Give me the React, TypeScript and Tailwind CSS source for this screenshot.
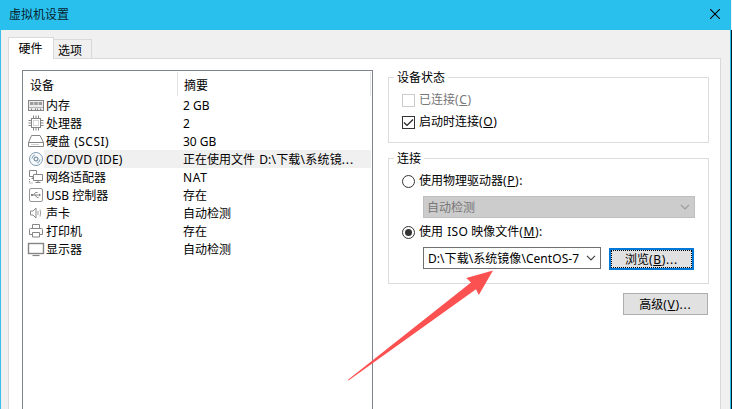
import React from "react";

type Device = { icon: React.ReactNode; name: React.ReactNode; summary: React.ReactNode; selected?: boolean };

const G = "#858585";

const Svg = ({ children }: { children: React.ReactNode }) => (
  <svg width="18" height="18" viewBox="0 0 18 18" fill="none" stroke={G} className="shrink-0">
    {children}
  </svg>
);

const MemoryIcon = () => (
  <Svg>
    <rect x="1.500" y="4.500" width="15" height="10" fill="#ececec" />
    <path d="M3 6h3.500v3H3zM7.300 6h3.500v3H7.300zM11.600 6H15v3h-3.400z" fill="#9c9c9c" stroke="none" />
    <path d="M2 11.500h14" stroke="#b4b4b4" />
    <path d="M4.500 12.500v2M8.500 12.500v2M10.500 12.500v2M13.500 12.500v2" />
  </Svg>
);
const CpuIcon = () => (
  <Svg>
    <rect x="4.500" y="4.500" width="9" height="9" />
    <rect x="6.500" y="6.500" width="5" height="5" stroke="#d5d5d5" />
    <path d="M6.500 1.500v3M9 1.500v3M11.500 1.500v3M6.500 13.500v3M9 13.500v3M11.500 13.500v3M1.500 6.500h3M1.500 9h3M1.500 11.500h3M13.500 6.500h3M13.500 9h3M13.500 11.500h3" />
  </Svg>
);
const DiskIcon = () => (
  <Svg>
    <path d="M4.500 3.500h8.500L16.500 10.500v4h-15v-4zM1.500 10.500h15" strokeLinejoin="round" />
    <path d="M4 12.500h8" stroke="#d0d0d0" />
  </Svg>
);
const DiscIcon = () => (
  <Svg>
    <circle cx="9" cy="9" r="6.500" stroke="#7f9cb3" fill="#f6fafc" />
    <circle cx="9" cy="9" r="2" stroke="#58778f" />
    <path d="M5 8.500A4 4 0 0 1 8 5M13 9.500A4 4 0 0 1 10 13" stroke="#7f9cb3" />
  </Svg>
);
const NetworkIcon = () => (
  <Svg>
    <path d="M2.500 2.500h7v6h-7zM4.500 10.500h3M6 8.500v2" />
    <path d="M6.500 6.500h9v6h-9z" fill="#fff" />
    <path d="M11 12.500v2M8.500 14.500h5" />
    <path d="M2.500 11v4h4" strokeDasharray="1 1" />
  </Svg>
);
const UsbIcon = () => (
  <Svg>
    <rect x="2.500" y="2.500" width="13" height="13" rx="1.500" stroke="#969696" />
    <path d="M5 9h8M6.500 9l2-2.500h2M8 9l2 2.500h1.500" />
    <path d="M12 7.500L14 9l-2 1.500zM4 8h2v2H4z" fill={G} stroke="none" />
  </Svg>
);
const SoundIcon = () => (
  <Svg>
    <path d="M3.500 7h2.500l3-3v10l-3-3H3.500z" stroke="#8a8a8a" />
    <path d="M11 7v4M13 5.500q1.200 3.500 0 7" stroke="#a2a2a2" />
  </Svg>
);
const PrinterIcon = () => (
  <Svg>
    <path d="M5.500 6.500v-4h7v4M5.500 12.500h-3v-5q0-1 1-1h11q1 0 1 1v5h-3" />
    <path d="M5.500 10.500h7v4.500h-7z" />
  </Svg>
);
const DisplayIcon = () => (
  <Svg>
    <rect x="1.500" y="3.500" width="15" height="10" strokeWidth="1.400" />
    <path d="M5.500 15.500h7" strokeWidth="1.200" />
  </Svg>
);

const Dots = () => <span className="tracking-[0.8px]">...</span>;

const devices: Device[] = [
  { icon: <MemoryIcon />, name: "内存", summary: "2 GB" },
  { icon: <CpuIcon />, name: "处理器", summary: "2" },
  { icon: <DiskIcon />, name: <>硬盘 <span className="ml-px tracking-[0.5px]">(SCSI)</span></>, summary: "30 GB" },
  {
    icon: <DiscIcon />,
    name: <span className="tracking-[0.1px]">CD/DVD (IDE)</span>,
    summary: <>正在使用文件 <span className="ml-px tracking-[0.2px]">D:\下载\系统镜</span><Dots /></>,
    selected: true,
  },
  { icon: <NetworkIcon />, name: "网络适配器", summary: <span className="tracking-[0.7px]">NAT</span> },
  { icon: <UsbIcon />, name: "USB 控制器", summary: "存在" },
  { icon: <SoundIcon />, name: "声卡", summary: "自动检测" },
  { icon: <PrinterIcon />, name: "打印机", summary: "存在" },
  { icon: <DisplayIcon />, name: "显示器", summary: "自动检测" },
];

const Key = ({ k }: { k: string }) => (
  <span className="tracking-[0.6px]">
    (<span className="underline decoration-1 underline-offset-[1px]">{k}</span>)
  </span>
);

const Radio = ({ checked }: { checked?: boolean }) => (
  <span className="flex size-[13px] shrink-0 items-center justify-center rounded-full border border-[#333] bg-white">
    {checked && <span className="size-[7px] rounded-full bg-[#333]" />}
  </span>
);

const Chevron = ({ color }: { color: string }) => (
  <svg width="10" height="6" viewBox="0 0 10 6" fill="none" stroke={color} strokeWidth="1.200" className="shrink-0">
    <path d="M1 .8L5 4.800 9 .8" />
  </svg>
);

export default function App() {
  return (
    <div className="relative flex h-[409px] w-[732px] flex-col overflow-hidden bg-[#f0f0f0] font-['Noto_Sans','Noto_Sans_CJK_SC',sans-serif] text-[12px] leading-[18px] whitespace-nowrap text-black">
      <header className="flex h-[30px] w-[731px] shrink-0 items-center justify-between bg-[#29c0ee] pr-[11px] pl-[9px]">
        <span className="text-[#06222c]">虚拟机设置</span>
        <svg width="10" height="10" viewBox="0 0 10 10" stroke="#000" strokeWidth="1.100" className="-translate-y-[1px]">
          <path d="M0 0L10 10M10 0L0 10" />
        </svg>
      </header>

      <div className="flex min-h-0 flex-1 flex-col border-r border-l border-r-[#101c22] border-l-[#35bfea]">
        <div className="flex min-h-0 flex-1 flex-col border-r border-[#29c0ee] pr-[9px] pl-[7px]">
          <nav className="z-10 -mb-px flex h-[29px] shrink-0 items-end">
            <div className="flex h-[22px] w-[46px] justify-center border border-b-0 border-[#d9d9d9] bg-white pt-[2px] pr-[7px] pl-[6px]">硬件</div>
            <div className="flex h-[20px] w-[38px] border border-l-0 border-[#d9d9d9] bg-[#f0f0f0] pt-[2px] pl-[4px]">选项</div>
          </nav>
          <main className="flex min-h-0 flex-1 border border-b-0 border-[#d9d9d9] bg-white pt-[11px] pl-[13px]">
            <section className="h-full w-[351px] shrink-0 border border-b-0 border-[#7f838c] pt-px pr-px">
              <div className="flex h-[24px] pl-[7px]">
                <span className="w-[147px] pt-[5px]">设备</span>
                <span className="flex-1 border-r border-l border-[#e2e2e2] pt-[5px] pl-[6px]">摘要</span>
              </div>
              {devices.map((d, i) => (
                <div key={i} className="flex h-[18px] pl-[4px]">
                  {d.icon}
                  <div className={d.selected ? "-ml-px flex flex-1 bg-[#f0f0f0] pt-px pl-px" : "-ml-px flex flex-1 pt-px pl-px"}>
                    <span className="w-[138px] pl-px">{d.name}</span>
                    <span>{d.summary}</span>
                  </div>
                </div>
              ))}
            </section>

            <section className="ml-[15px] flex w-[321px] flex-col pt-[7px]">
              <div className="h-[66px] border border-[#dcdcdc] pl-[5px]">
                <div className="-mt-[9px] w-fit bg-white px-[3px]">设备状态</div>
                <div className="mt-[2px] ml-[8px] flex h-[22px] items-center gap-[4px] text-[#777]">
                  <span className="size-[13px] border border-[#ccc]" />
                  <span><span>已连接</span><Key k="C" /></span>
                </div>
                <div className="ml-[8px] flex h-[22px] items-center gap-[4px]">
                  <span className="flex size-[13px] items-center justify-center border border-[#333]">
                    <svg width="11" height="9" viewBox="0 0 11 9" fill="none" stroke="#222" strokeWidth="1.200">
                      <path d="M1 4.500L4 7.500L10 1.500" />
                    </svg>
                  </span>
                  <span>启动时连接<Key k="O" /></span>
                </div>
              </div>

              <div className="mt-[15px] h-[126px] border border-[#dcdcdc] pl-[5px]">
                <div className="-mt-[9px] w-fit bg-white px-[3px]">连接</div>
                <div className="mt-[3px] ml-[8px] flex h-[20px] items-center gap-[4px]">
                  <Radio />
                  <span>使用物理驱动器<Key k="P" />:</span>
                </div>
                <div className="mt-[5px] ml-[29px] flex h-[22px] w-[272px] items-center justify-between border border-[#bfbfbf] bg-[#ccc] pr-[4px] pl-[3px] text-[#777]">
                  <span className="pt-[2px]">自动检测</span>
                  <Chevron color="#999" />
                </div>
                <div className="mt-[4px] ml-[8px] flex h-[20px] items-center gap-[4px]">
                  <Radio checked />
                  <span>使用 <span className="ml-px tracking-[0.3px]">ISO</span> 映像文件<Key k="M" />:</span>
                </div>
                <div className="mt-[5px] ml-[29px] flex">
                  <div className="flex h-[22px] w-[178px] items-center justify-between border border-[#707070] pr-[4px] pl-[4px]">
                    <span className="w-[151px] overflow-hidden pt-px tracking-[0.05px]">D:\下载\系统镜像\CentOS-7-</span>
                    <Chevron color="#444" />
                  </div>
                  <div className="mt-px ml-[8px] h-[22px] w-[85px] border-2 border-[#0078d7] bg-[#e1e1e1]">
                    <div className="flex h-full items-center justify-center border border-dotted border-black">
                      <span className="pt-[2px]">浏览<Key k="B" /><Dots /></span>
                    </div>
                  </div>
                </div>
              </div>

              <div className="mt-[9px] ml-[235px] flex h-[22px] w-[85px] items-center justify-center border border-[#adadad] bg-[#e1e1e1]">
                <span className="pt-[2px]">高级<Key k="V" /><Dots /></span>
              </div>
            </section>
          </main>
        </div>
      </div>

      <svg className="pointer-events-none absolute inset-0 z-20" width="732" height="409" viewBox="0 0 732 409">
        <path d="M493 270.500L466.300 278L471 282.500L348 379.800L348.500 380.500L476 289.300L478.800 295z" fill="#fb5151" />
      </svg>
    </div>
  );
}
